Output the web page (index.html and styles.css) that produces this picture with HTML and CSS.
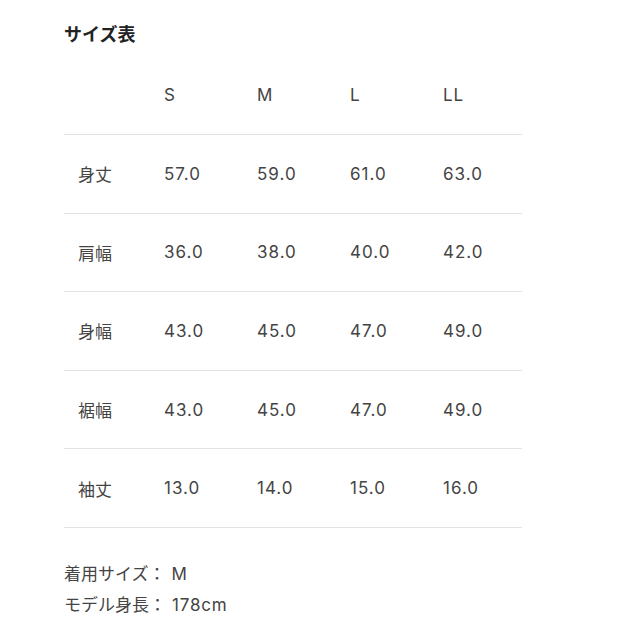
FILE: index.html
```html
<!DOCTYPE html>
<html lang="ja">
<head>
<meta charset="utf-8">
<link rel="stylesheet" href="styles.css">
</head>
<body>
<div class="page">
  <h2 class="title">サイズ表</h2>
  <table class="size-table">
    <thead>
      <tr><th></th><th>S</th><th>M</th><th>L</th><th>LL</th></tr>
    </thead>
    <tbody>
      <tr><th>身丈</th><td>57.0</td><td>59.0</td><td>61.0</td><td>63.0</td></tr>
      <tr><th>肩幅</th><td>36.0</td><td>38.0</td><td>40.0</td><td>42.0</td></tr>
      <tr><th>身幅</th><td>43.0</td><td>45.0</td><td>47.0</td><td>49.0</td></tr>
      <tr><th>裾幅</th><td>43.0</td><td>45.0</td><td>47.0</td><td>49.0</td></tr>
      <tr><th>袖丈</th><td>13.0</td><td>14.0</td><td>15.0</td><td>16.0</td></tr>
    </tbody>
  </table>
  <div class="notes">
    <p>着用サイズ：<span class="val">M</span></p>
    <p>モデル身長：<span class="val">178cm</span></p>
  </div>
</div>
</body>
</html>
```
FILE: styles.css
```css
html, body {
  margin: 0;
  padding: 0;
  background: #ffffff;
}
body {
  font-family: Inter, "Noto Sans CJK JP", sans-serif;
  color: #444444;
}
.page {
  padding: 21px 0 0 64px;
}
.title {
  margin: 0;
  font-size: 18px;
  line-height: 24px;
  font-weight: 700;
  color: #222;
  font-family: "Noto Sans CJK JP", sans-serif;
}
.size-table {
  margin-top: 11px;
  border-collapse: collapse;
  width: 458px;
  table-layout: fixed;
  font-size: 17px;
  letter-spacing: 1px;
  font-weight: 400;
}
.size-table th,
.size-table td {
  padding: 0 0 0 14px;
  height: 77.6px;
  text-align: left;
  font-weight: 400;
  vertical-align: middle;
  border-bottom: 1px solid #e2e2e2;
}
.size-table thead th {
  height: 78px;
}
.size-table th:first-child {
  width: 72px;
  font-family: "Noto Sans CJK JP", sans-serif;
  font-size: 17px;
  letter-spacing: 0;
}
.notes {
  margin-top: 30px;
  font-size: 17px;
  line-height: 30px;
  font-family: "Noto Sans CJK JP", sans-serif;
}
.notes p {
  margin: 0;
}
.val {
  font-family: Inter, sans-serif;
  margin-left: 6px;
  font-size: 17px;
  letter-spacing: 0.8px;
}
```
